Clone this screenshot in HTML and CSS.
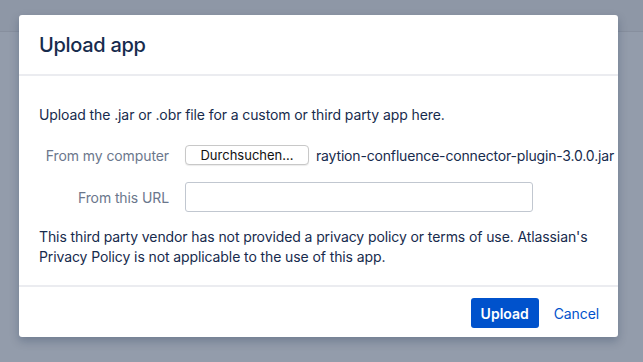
FILE: index.html
```html
<!DOCTYPE html>
<html lang="en">
<head>
  <meta charset="UTF-8" />
  <meta name="viewport" content="width=device-width, initial-scale=1.0"/>
  <title>Upload app</title>
  <link rel="stylesheet" href="styles.css">
</head>
<body>

  <div class="page-header"></div>

  <div class="dialog">
    <div class="dialog-header">
      <h2>Upload app</h2>
    </div>

    <form class="dialog-content" id="uploadForm">
      <p class="intro">Upload the .jar or .obr file for a custom or third party app here.</p>

      <div class="form-row">
        <label for="file">From my computer</label>
        <div class="field">
          <button type="button" class="browse">Durchsuchen…</button>
          <span class="file-name">raytion-confluence-connector-plugin-3.0.0.jar</span>
        </div>
      </div>

      <div class="form-row">
        <label for="url">From this URL</label>
        <div class="field">
          <input type="text" id="url" name="url" />
        </div>
      </div>

      <p class="notice">This third party vendor has not provided a privacy policy or terms of use. Atlassian's Privacy Policy is not applicable to the use of this app.</p>
    </form>

    <div class="dialog-footer">
      <button type="submit" form="uploadForm" class="primary">Upload</button>
      <a href="#" class="cancel">Cancel</a>
    </div>
  </div>

</body>
</html>
```

FILE: styles.css
```css
body {
  font-family: Inter, "Liberation Sans", sans-serif;
  background-color: #939cab;
  margin: 0;
  height: 100vh;
  color: #172b4d;
  font-size: 14px;
  letter-spacing: -0.1px;
  position: relative;
  overflow: hidden;
}

/* page behind the blanket */
.page-header {
  height: 31px;
  background-color: #8e97a6;
  border-bottom: 1px solid #878f9e;
}

.dialog {
  position: absolute;
  top: 15px;
  left: 19px;
  width: 599px;
  background-color: white;
  border-radius: 3px;
  box-shadow: 0 4px 10px rgba(9, 30, 66, 0.25);
}

.dialog-header {
  height: 59px;
  padding: 0 20px;
  display: flex;
  align-items: center;
  border-bottom: 2px solid #ebecf0;
}

h2 {
  margin: 0;
  font-size: 20px;
  font-weight: 500;
  letter-spacing: -0.3px;
}

.dialog-content {
  padding: 29px 20px 18px;
}

.dialog-content p {
  margin: 0;
  line-height: 20px;
}

.form-row {
  display: flex;
  align-items: center;
  height: 30px;
  margin-top: 15px;
  white-space: nowrap;
}

.form-row + .form-row {
  margin-top: 12px;
}

.form-row label {
  flex-shrink: 0;
  box-sizing: border-box;
  width: 146px;
  padding-right: 16px;
  text-align: right;
  color: #6b778c;
}

.field {
  display: flex;
  align-items: center;
}

.browse {
  font-family: inherit;
  font-size: 13px;
  color: #111;
  background-color: white;
  border: 1px solid #c8c8c8;
  border-radius: 4px;
  height: 20px;
  width: 124px;
  padding: 0;
  box-shadow: 0 1px 1px rgba(0,0,0,0.08);
}

.file-name {
  margin-left: 7px;
  letter-spacing: -0.17px;
}

.field input {
  box-sizing: border-box;
  width: 348px;
  height: 30px;
  padding: 0 6px;
  border: 1px solid #c1c7d0;
  border-radius: 3px;
  font-size: 14px;
}

.notice {
  margin-top: 15px !important;
}

.dialog-footer {
  border-top: 2px solid #ebecf0;
  padding: 11px 19px 9px 20px;
  display: flex;
  justify-content: flex-end;
  align-items: center;
  gap: 15px;
}

.primary {
  font-family: inherit;
  font-size: 14px;
  font-weight: 600;
  color: white;
  background-color: #0052cc;
  border: none;
  border-radius: 3px;
  height: 30px;
  width: 68px;
  padding: 0;
  cursor: pointer;
}

.cancel {
  color: #0052cc;
  text-decoration: none;
}
```
